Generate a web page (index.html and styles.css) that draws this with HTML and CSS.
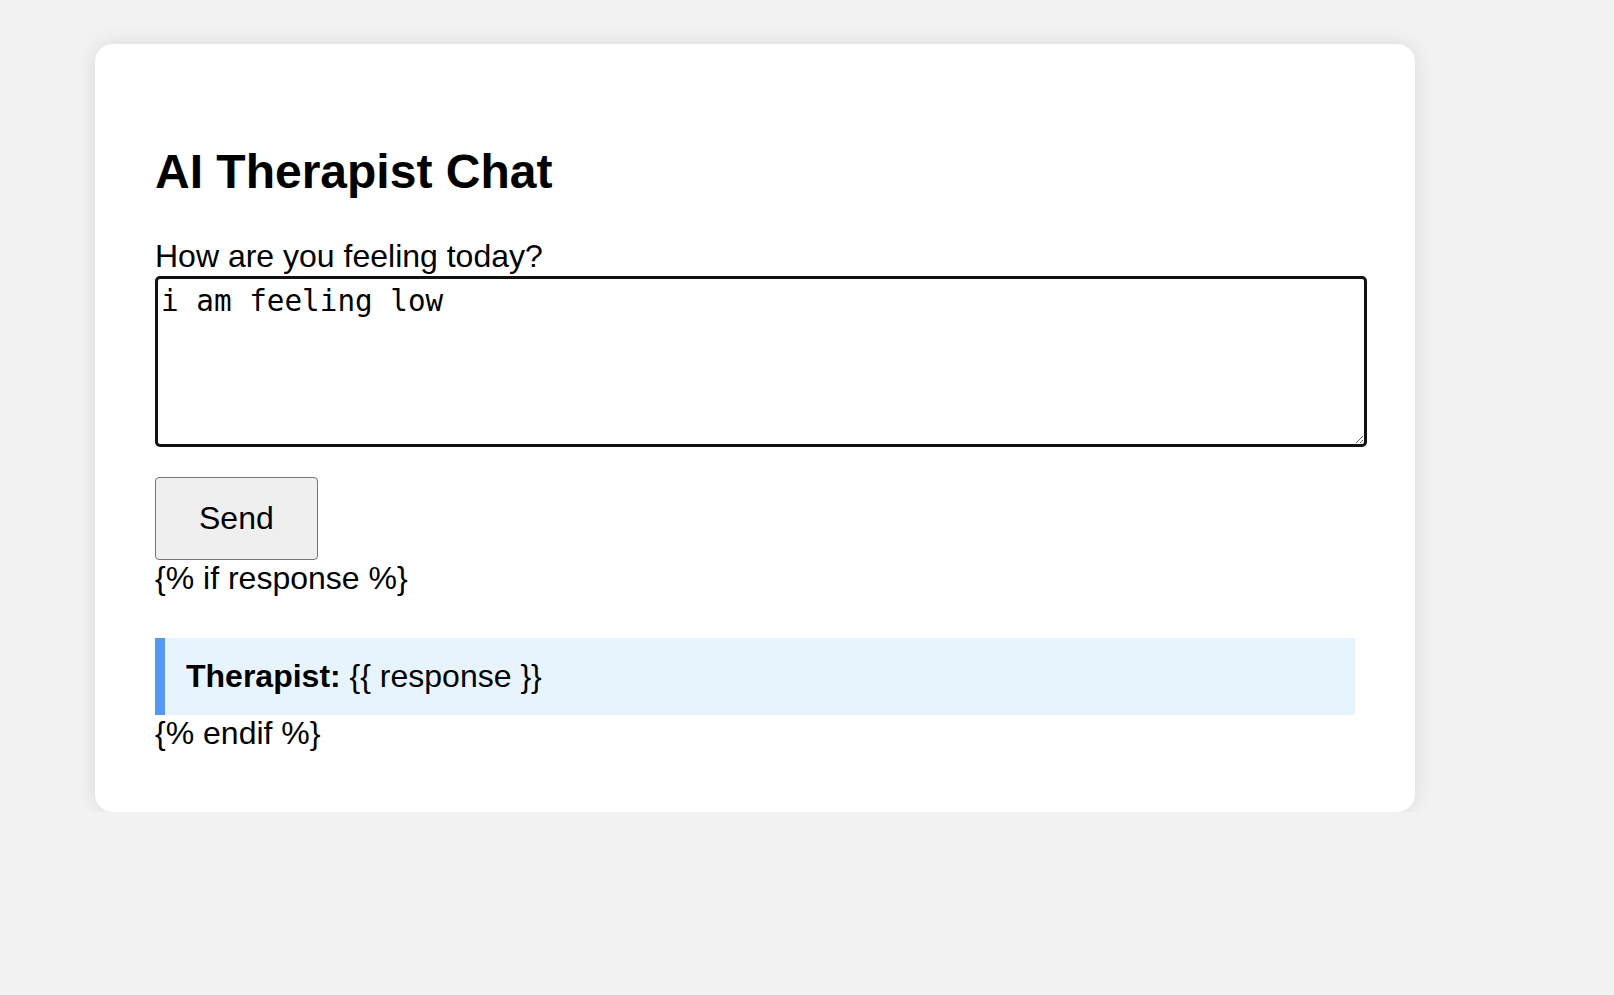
FILE: index.html
```html
<!DOCTYPE html>
<html lang="en">
<head>
<meta charset="utf-8">
<title>AI Therapist Chat</title>
<link rel="stylesheet" href="styles.css">
</head>
<body>
  <main class="card">
    <h1 class="title">AI Therapist Chat</h1>
    <form class="chat-form">
      <label class="prompt" for="message">How are you feeling today?</label>
      <textarea class="message" id="message" name="message" spellcheck="false">i am feeling low
</textarea>
      <button class="send" type="submit">Send</button>
    </form>
    <p class="tpl">{% if response %}</p>
    <div class="reply"><strong>Therapist:</strong> {{ response }}</div>
    <p class="tpl">{% endif %}</p>
  </main>
</body>
</html>
```

FILE: styles.css
```css
html, body {
  margin: 0;
  padding: 0;
}

body {
  background: #f2f2f2;
  font-family: "Liberation Sans", Arial, sans-serif;
  font-size: 32px;
  color: #000;
  padding: 44px 199px 0 95px;
}

.card {
  background: #ffffff;
  border-radius: 18px;
  box-shadow: 0 0 20px rgba(0, 0, 0, 0.1);
  padding: 60px;
  width: 1200px;
}

.title {
  font-size: 48px;
  font-weight: bold;
  margin: 40px 0 39px 0;
  line-height: normal;
}

.chat-form {
  display: block;
  margin: 0;
}

.prompt {
  display: block;
  line-height: normal;
}

.message {
  display: block;
  box-sizing: border-box;
  width: 1212px;
  height: 171px;
  margin: 1px 0 0 0;
  padding: 3px 2px 2px 3px;
  border: 3px solid #111;
  border-radius: 5px;
  font-family: "DejaVu Sans Mono", monospace;
  font-size: 29.3px;
  line-height: 39px;
  color: #000;
  background: #fff;
  outline: none;
}

.send {
  display: block;
  margin-top: 30px;
  padding: 22px 43px;
  font-family: "Liberation Sans", Arial, sans-serif;
  font-size: 32px;
  line-height: normal;
  color: #000;
  background: #efefef;
  border: 1px solid #767676;
  border-radius: 4px;
}

.tpl {
  margin: 0;
  line-height: normal;
}

.reply {
  margin-top: 41px;
  background: #e8f4fd;
  border-left: 10px solid #5599f7;
  padding: 20px 21px;
  line-height: normal;
}

.reply strong {
  font-weight: bold;
}
```
